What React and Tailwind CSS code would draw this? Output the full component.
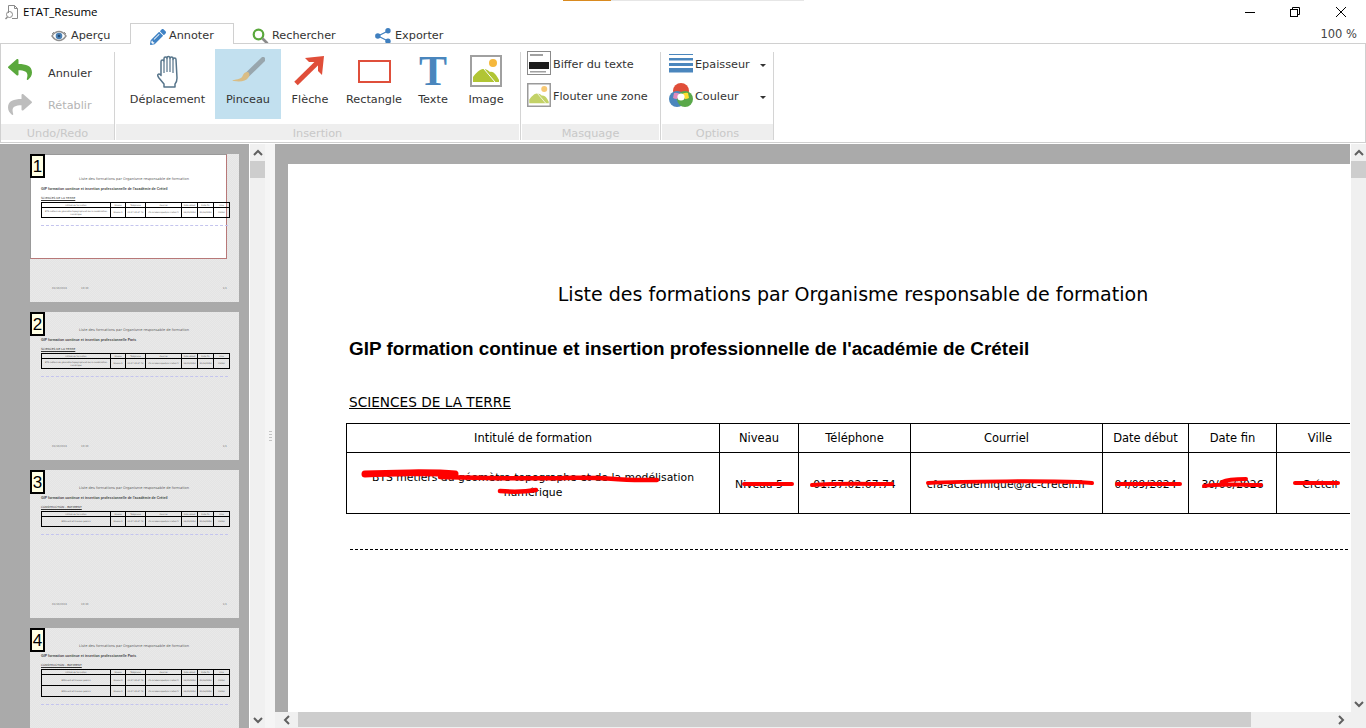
import { FaReply, FaShare, FaPencilAlt } from "react-icons/fa";

const uiFont = "font-['DejaVu_Sans',sans-serif]";

const thumbs = [
  { n: 1, heading: "GIP formation continue et insertion professionnelle de l'académie de Créteil", section: "SCIENCES DE LA TERRE", rows: 1, long: true, active: true },
  { n: 2, heading: "GIP formation continue et insertion professionnelle Paris", section: "SCIENCES DE LA TERRE", rows: 1, long: true },
  { n: 3, heading: "GIP formation continue et insertion professionnelle de l'académie de Créteil", section: "CONSTRUCTION - BATIMENT", rows: 1 },
  { n: 4, heading: "GIP formation continue et insertion professionnelle Paris", section: "CONSTRUCTION - BATIMENT", rows: 2 },
];

const TitleIcon = () => (
  <svg width="14" height="16" viewBox="0 0 14 16" fill="none" stroke="#8a8a8a" strokeWidth="1">
    <path d="M3.5 9V1.5h6l3 3v10H7" />
    <path d="M9.5 1.5v3h3" />
    <circle cx="4.5" cy="10.5" r="3" />
    <path d="M2.5 13l-2 2" strokeWidth="1.5" />
  </svg>
);

const EyeIcon = () => (
  <svg width="16" height="12" viewBox="0 0 16 12" className="shrink-0">
    <path d="M1 6c2-3 4.500-4.500 7-4.500S13 3 15 6c-2 3-4.500 4.500-7 4.500S3 9 1 6z" fill="#fff" stroke="#8f8f8f" strokeWidth="1.400" />
    <circle cx="8" cy="6" r="3.300" fill="#4a80b5" />
    <circle cx="8" cy="6" r="1.300" fill="#24486e" />
    <path d="M1 4L3 2M15 4l-2-2" stroke="#8f8f8f" />
  </svg>
);

const SearchIcon = () => (
  <svg width="17" height="17" viewBox="0 0 17 17" fill="none" className="shrink-0">
    <circle cx="6.500" cy="6.500" r="4.800" stroke="#5aa83c" strokeWidth="2.200" />
    <path d="M10.500 10.500l5 5" stroke="#8a8a8a" strokeWidth="2.600" />
  </svg>
);

const ShareIcon = () => (
  <svg width="16" height="16" viewBox="0 0 16 16" className="shrink-0">
    <path d="M13 3L3 8l10 5" fill="none" stroke="#3f7fbf" strokeWidth="1.200" />
    <circle cx="13" cy="2.800" r="2.700" fill="#3f7fbf" />
    <circle cx="2.800" cy="8" r="2.700" fill="#3f7fbf" />
    <circle cx="13" cy="13.200" r="2.700" fill="#3f7fbf" />
  </svg>
);

const HandIcon = () => (
  <svg width="24" height="33" viewBox="0 0 24 33" fill="none" stroke="#56748a" strokeWidth="1.500" strokeLinejoin="round">
    <path d="M5 19V6.500a1.500 1.500 0 0 1 3 0V3.500a1.500 1.500 0 0 1 3 0v-.5a1.500 1.500 0 0 1 3 0v.5a1.500 1.500 0 0 1 3 0v1a1.500 1.500 0 0 1 3 0L21 23c0 3-1 5-2 6v3H8v-3l-5-6c-1.500-2-1.500-3-1-3.500 1-1 2.500 0 3 1z" />
    <path d="M8 7v11M11 3.500V17M14 3.500V17M17 4.500V18" strokeWidth="1.200" />
  </svg>
);

const BrushIcon = () => (
  <svg width="34" height="28" viewBox="0 0 34 28">
    <path d="M32 2.500L17 17" stroke="#98a6ad" strokeWidth="5" strokeLinecap="round" />
    <path d="M17 15c-3 0-4 1-5 3-1 3-3 4-9 5-2 .5-2 1 0 1 7 1 12 0 14-3 1-1 2-3 1-5z" fill="#d9bd85" />
  </svg>
);

const ArrowIcon = () => (
  <svg width="32" height="30" viewBox="0 0 32 30">
    <path d="M2 27.500L26 4" stroke="#e04e39" strokeWidth="5" />
    <path d="M11 2l19-2-2 19-4-4V6H15z" fill="#e04e39" />
  </svg>
);

const ImageIcon = ({ size = 32, faded = false }) => (
  <svg width={size} height={size} viewBox="0 0 32 32">
    <rect x="1" y="1" width="30" height="30" fill="#fff" stroke={faded ? "#9a9a9a" : "#a0a0a0"} strokeWidth="2" />
    <circle cx="23" cy="8" r="4" fill={faded ? "#f7c873" : "#f5b83d"} />
    <path d="M3 27v-5c3-4 7-8 10-8 3 0 5 1 7 3 3-1 6 2 9 8v2z" fill={faded ? "#c3d267" : "#b1c534"} />
    <path d="M14 14l11 13" stroke="#fff" strokeWidth="1" />
  </svg>
);

const RedactIcon = () => (
  <svg width="24" height="24" viewBox="0 0 24 24">
    <rect x=".5" y=".5" width="23" height="23" fill="#fff" stroke="#8a8a8a" />
    <rect x="3" y="3" width="13" height="2" fill="#a0a0a0" />
    <rect x="2" y="11" width="20" height="7" fill="#1c1c1c" />
    <rect x="3" y="20" width="16" height="1.500" fill="#a0a0a0" />
  </svg>
);

const WidthIcon = () => (
  <svg width="24" height="19" viewBox="0 0 24 19" fill="#4a86bd">
    <rect width="24" height="1" />
    <rect y="4" width="24" height="2.500" />
    <rect y="9" width="24" height="3" />
    <rect y="14" width="24" height="4.500" />
  </svg>
);

const ColorIcon = () => (
  <svg width="24" height="24" viewBox="0 0 24 24">
    <circle cx="12" cy="8" r="8" fill="#e04e39" />
    <circle cx="8" cy="16" r="8" fill="#4a86bd" />
    <circle cx="16" cy="16" r="8" fill="#5aa84a" />
    <path d="M5 10a8 8 0 0 1 7 2 8 8 0 0 0-4 4 8 8 0 0 1-4-1z" fill="#e08bbd" />
    <path d="M19 10a8 8 0 0 0-7 2 8 8 0 0 1 4 4 8 8 0 0 0 4-1z" fill="#ffe033" />
    <circle cx="12" cy="14" r="3.600" fill="#fff" />
  </svg>
);

const Chevron = ({ dir }) => {
  const paths = {
    up: "M1 6l4-4 4 4",
    down: "M1 2l4 4 4-4",
    left: "M6 1L2 5l4 4",
    right: "M2 1l4 4-4 4",
  };
  return (
    <svg width="10" height="10" viewBox="0 0 10 10" fill="none" stroke="#606060" strokeWidth="2">
      <path d={paths[dir]} transform={dir === "up" || dir === "down" ? "translate(0 1)" : "translate(1 0)"} />
    </svg>
  );
};

const TitleBar = () => (
  <div className="relative flex h-[23px] items-center">
    <div className="absolute left-[563px] top-0 h-px w-[241px] bg-[#e6e6e6]">
      <div className="h-px w-[48px] bg-[#d98a1f]" />
    </div>
    <div className="ml-[5px] flex w-[18px] items-center pt-px"><TitleIcon /></div>
    <span className="font-['Open_Sans',sans-serif] text-[11.500px] text-black">ETAT_Resume</span>
    <div className="ml-auto flex items-center">
      <svg width="10" height="10" viewBox="0 0 10 10" className="mr-[35px]"><path d="M0 5.500h10" stroke="#000" /></svg>
      <svg width="10" height="10" viewBox="0 0 10 10" fill="none" stroke="#000" className="mr-[36px]">
        <rect x=".5" y="2.500" width="7" height="7" />
        <path d="M2.500 2.500v-2h7v7h-2" />
      </svg>
      <svg width="10" height="10" viewBox="0 0 10 10" fill="none" stroke="#000" className="mr-[20px]"><path d="M0 0l10 10M10 0L0 10" /></svg>
    </div>
  </div>
);

const Tab = ({ icon, label, active, className }) => (
  <div
    className={`flex items-center ${className} ${
      active ? "relative z-10 -mb-px h-[21px] border border-b-0 border-[#d0d0d0] bg-white pt-[5px]" : "h-[20px] pt-[6px]"
    }`}
  >
    {icon}
    <span>{label}</span>
  </div>
);

const TabRow = () => (
  <div className="flex h-[20px] items-end text-[11.250px] text-[#333]">
    <Tab icon={<EyeIcon />} label="Aperçu" className="ml-[51px] w-[79px] gap-[4px]" />
    <Tab icon={<FaPencilAlt className="shrink-0 text-[16px] text-[#3f82c4]" />} label="Annoter" active className="w-[104px] gap-[3px] pl-[19px]" />
    <Tab icon={<SearchIcon />} label="Rechercher" className="w-[123px] gap-[3px] pl-[18px]" />
    <Tab icon={<ShareIcon />} label="Exporter" className="gap-[4px] pl-[18px]" />
    <span className="ml-auto mr-[9px] self-center pt-[4px] text-[11.500px] text-[#444]">100 %</span>
  </div>
);

const Group = ({ title, className, children }) => (
  <div className={`flex flex-col ${className}`}>
    <div className="flex h-[80px]">{children}</div>
    <div className="flex h-[16px] items-center justify-center bg-[#eeeeee] pt-[4px] text-[11.250px] text-[#c8c8c8]">{title}</div>
  </div>
);

const Separator = ({ className = "" }) => <div className={`h-[88px] w-px self-end bg-[#d4d4d4] ${className}`} />;

const BigButton = ({ icon, label, active, className }) => (
  <div className={`flex h-[70px] flex-col items-center ${active ? "bg-[#c2e0ef]" : ""} ${className}`}>
    <div className="flex h-[42px] items-center justify-center pt-[2px]">{icon}</div>
    <span className="mt-[1px]">{label}</span>
  </div>
);

const SmallRow = ({ icon, label, caret, className = "" }) => (
  <div className={`flex h-[32px] items-center ${className}`}>
    <div className="mb-[4px] flex w-[26px] items-center">{icon}</div>
    <span>{label}</span>
    {caret && <span className="ml-auto mr-[7px] h-0 w-0 border-x-[3px] border-t-[3px] border-x-transparent border-t-[#333]" />}
  </div>
);

const Ribbon = () => (
  <div className="h-[100px] border border-[#d0d0d0] bg-white text-[11.250px] text-[#333]">
    <div className="flex h-[96px] items-end">
      <Group title="Undo/Redo" className="w-[113px]">
        <div className="flex flex-col pl-[7px] pt-[14px]">
          <div className="flex h-[32px] items-center gap-[16px]">
            <FaReply className="mb-[10px] w-[24px] text-[25px] text-[#5aa83c]" />
            <span>Annuler</span>
          </div>
          <div className="flex h-[32px] items-center gap-[16px] text-[#b4b4b4]">
            <FaShare className="mb-[3px] w-[24px] text-[25px] text-[#bdbdbd]" />
            <span>Rétablir</span>
          </div>
        </div>
      </Group>
      <Separator className="mr-px" />
      <Group title="Insertion" className="w-[403px]">
        <div className="flex pl-[4px] pt-[5px]">
          <BigButton icon={<HandIcon />} label="Déplacement" className="w-[95px]" />
          <BigButton icon={<BrushIcon />} label="Pinceau" active className="w-[66px]" />
          <BigButton icon={<ArrowIcon />} label="Flèche" className="w-[58px]" />
          <BigButton icon={<div className="h-[23px] w-[33px] border-2 border-[#df4f3b]" />} label="Rectangle" className="w-[70px]" />
          <BigButton
            icon={<span className="font-['Liberation_Serif',serif] text-[42px] font-bold leading-[32px] text-[#4a86bd]">T</span>}
            label="Texte"
            className="w-[48px]"
          />
          <BigButton icon={<ImageIcon />} label="Image" className="w-[58px]" />
        </div>
      </Group>
      <Separator className="ml-px mr-px" />
      <Group title="Masquage" className="w-[137px]">
        <div className="flex flex-col pl-[5px] pt-[5px]">
          <SmallRow icon={<RedactIcon />} label="Biffer du texte" />
          <SmallRow icon={<ImageIcon size={24} faded />} label="Flouter une zone" />
        </div>
      </Group>
      <Separator className="ml-px mr-px" />
      <Group title="Options" className="w-[111px]">
        <div className="flex w-full flex-col pl-[7px] pt-[5px]">
          <SmallRow icon={<WidthIcon />} label="Epaisseur" caret />
          <SmallRow icon={<ColorIcon />} label="Couleur" caret />
        </div>
      </Group>
      <Separator />
    </div>
  </div>
);

const ThumbTable = ({ rows, long }) => (
  <table className="w-[188px] table-fixed border-collapse border border-black text-center text-[2.100px] leading-[3px] text-[#555]">
    <colgroup>
      <col className="w-[69px]" />
      <col className="w-[15px]" />
      <col className="w-[20px]" />
      <col className="w-[36px]" />
      <col className="w-[16px]" />
      <col className="w-[16px]" />
      <col className="w-[16px]" />
    </colgroup>
    <tbody>
      <tr className="h-[5px]">
        {["Intitulé de formation", "Niveau", "Téléphone", "Courriel", "Date début", "Date fin", "Ville"].map((h) => (
          <td key={h} className="border border-black p-0">{h}</td>
        ))}
      </tr>
      {Array.from({ length: rows }).map((_, i) => (
        <tr key={i} className={rows > 1 ? "h-[11px]" : "h-[10px]"}>
          <td className="border border-black p-0">
            {long ? "BTS métiers du géomètre-topographe et de la modélisation numérique" : "Bâtiment et travaux publics"}
          </td>
          <td className="border border-black p-0">Niveau 5</td>
          <td className="border border-black p-0">01.57.02.67.74</td>
          <td className="border border-black p-0">cfa-academique@ac-creteil.fr</td>
          <td className="border border-black p-0">04/09/2024</td>
          <td className="border border-black p-0">30/06/2026</td>
          <td className="border border-black p-0">Créteil</td>
        </tr>
      ))}
    </tbody>
  </table>
);

const Thumb = ({ thumb }) => (
  <div className="relative h-[148px] w-[209px] shrink-0 bg-[repeating-conic-gradient(#e4e4e4_0_25%,#e9e9e9_0_50%)] bg-[length:2px_2px]">
    {thumb.active && <div className="absolute left-0 top-0 h-[105px] w-[197px] border border-l-[#999] border-t-[#999] border-r-[#b87878] border-b-[#b87878] bg-white" />}
    <div className="absolute left-0 top-0 flex h-[24px] w-[15px] items-center justify-center border-2 border-black bg-[#ffffe4] font-['Liberation_Sans',sans-serif] text-[17px] leading-none text-black">
      {thumb.n}
    </div>
    <div className={`relative flex h-full flex-col pl-[11px] font-['DejaVu_Sans',sans-serif] ${thumb.active ? "pt-[23px]" : "pt-[16px]"}`}>
      <div className="w-[186px] text-center text-[3.550px] leading-[4px] text-[#666]">Liste des formations par Organisme responsable de formation</div>
      <div className="mt-[6px] font-['Liberation_Sans',sans-serif] text-[3.530px] font-bold leading-[5px] text-[#444]">{thumb.heading}</div>
      <div className="mt-[4px] text-[2.900px] leading-[4px] text-[#333] underline">{thumb.section}</div>
      <div className="mt-[2px]"><ThumbTable rows={thumb.rows} long={thumb.long} /></div>
      <div className="mt-[7px] w-[187px] border-t border-dashed border-[#c4c4ee]" />
      {thumb.n < 4 && (
        <div className="absolute left-[22px] top-[133px] flex w-[175px] text-[2.600px] leading-[4px] text-[#777]">
          <span className="w-[29px]">01/10/2024</span>
          <span>10:30</span>
          <span className="ml-auto">1/1</span>
        </div>
      )}
    </div>
  </div>
);

const ThumbPanel = () => (
  <div className="flex h-full w-[249px] flex-col gap-[10px] overflow-hidden bg-[#aaaaaa] pl-[30px] pt-[10px]">
    {thumbs.map((thumb) => (
      <Thumb key={thumb.n} thumb={thumb} />
    ))}
  </div>
);

const VScrollbar = () => (
  <div className="flex h-full w-[15px] shrink-0 flex-col items-center justify-between bg-[#f0f0f0]">
    <div className="flex w-full flex-col items-center">
      <div className="flex h-[17px] items-center justify-center"><Chevron dir="up" /></div>
      <div className="h-[17px] w-full bg-[#cdcdcd]" />
    </div>
    <div className="flex h-[17px] items-center justify-center"><Chevron dir="down" /></div>
  </div>
);

const RedMarks = () => (
  <svg className="pointer-events-none absolute left-0 top-0" width="1130" height="548" viewBox="288 164 1130 548" fill="none" stroke="#ff0000" strokeLinecap="round">
    <path d="M365 474c20-1 70-2 90 0" strokeWidth="7" />
    <path d="M440 477c50 1 80 2 125 1s60 3 92 2" strokeWidth="4.500" />
    <path d="M500 491c12 1 24 1 36-1" strokeWidth="4.500" />
    <path d="M744 484h48" strokeWidth="4" />
    <path d="M812 485c25-2 55-1 80-1" strokeWidth="4" />
    <path d="M928 483c40-2 120-2 150-1l14 1" strokeWidth="4" />
    <path d="M1117 484h63" strokeWidth="4" />
    <path d="M1204 486c15-3 40-1 57-1M1222 482c6-3 16-3 24-3" strokeWidth="4" />
    <path d="M1295 483h43" strokeWidth="4" />
  </svg>
);

const DocTable = () => (
  <table className="-ml-px w-[1017px] table-fixed border-collapse border border-black text-center font-['DejaVu_Sans',sans-serif] text-[11.500px] leading-[15px] text-black">
    <colgroup>
      <col className="w-[373px]" />
      <col className="w-[79px]" />
      <col className="w-[112px]" />
      <col className="w-[192px]" />
      <col className="w-[86px]" />
      <col className="w-[88px]" />
      <col className="w-[87px]" />
    </colgroup>
    <tbody>
      <tr className="h-[29px]">
        {["Intitulé de formation", "Niveau", "Téléphone", "Courriel", "Date début", "Date fin", "Ville"].map((h) => (
          <td key={h} className="border border-black p-0">{h}</td>
        ))}
      </tr>
      <tr className="h-[61px] text-[10.800px]">
        <td className="border border-black px-[10px] pb-0 pt-[3px]">BTS métiers du géomètre-topographe et de la modélisation numérique</td>
        <td className="border border-black p-0 pt-[3px]">Niveau 5</td>
        <td className="border border-black p-0 pt-[3px]">01.57.02.67.74</td>
        <td className="border border-black p-0 pt-[3px]">cfa-academique@ac-creteil.fr</td>
        <td className="border border-black p-0 pt-[3px]">04/09/2024</td>
        <td className="border border-black p-0 pt-[3px]">30/06/2026</td>
        <td className="border border-black p-0 pt-[3px]">Créteil</td>
      </tr>
    </tbody>
  </table>
);

const Viewer = () => (
  <div className="flex h-full min-w-0 flex-1 flex-col">
    <div className="flex min-h-0 flex-1">
      <div className="min-w-0 flex-1 overflow-hidden bg-[#aaaaaa] pl-[13px] pt-[20px]">
        <div className="relative h-[548px] w-[1130px] bg-white pl-[59px]">
          <h1 className="pr-[59px] pt-[118px] text-center font-['DejaVu_Sans',sans-serif] text-[19.050px] leading-[24px] text-black">
            Liste des formations par Organisme responsable de formation
          </h1>
          <h2 className="ml-[2px] mt-[31px] font-['Liberation_Sans',sans-serif] text-[18.900px] font-bold leading-[24px] text-black">
            GIP formation continue et insertion professionnelle de l'académie de Créteil
          </h2>
          <div className="ml-[2px] mt-[31px] font-['DejaVu_Sans',sans-serif] text-[13.670px] leading-[20px] text-black underline">SCIENCES DE LA TERRE</div>
          <div className="mt-[11px]"><DocTable /></div>
          <div className="ml-[3px] mt-[35px] border-t border-dashed border-black" />
          <RedMarks />
        </div>
      </div>
      <div className="w-px shrink-0 bg-white" />
      <VScrollbar />
    </div>
    <div className="flex h-[16px] shrink-0 items-center bg-[#f0f0f0]">
      <div className="flex w-[23px] justify-center"><Chevron dir="left" /></div>
      <div className="h-[15px] w-[953px] self-start bg-[#cdcdcd]" />
      <div className="ml-auto mr-[20px] flex"><Chevron dir="right" /></div>
    </div>
  </div>
);

const App = () => {
  return (
    <div className={`flex h-[728px] w-[1366px] flex-col overflow-hidden bg-white ${uiFont}`}>
      <TitleBar />
      <TabRow />
      <Ribbon />
      <div className="mt-px flex min-h-0 flex-1">
        <ThumbPanel />
        <div className="w-px shrink-0 bg-white" />
        <VScrollbar />
        <div className="flex h-full w-[10px] shrink-0 flex-col items-center justify-center gap-[2px] bg-[#f5f5f5]">
          <div className="h-px w-[3px] bg-[#c4c4c4]" />
          <div className="h-px w-[3px] bg-[#c4c4c4]" />
          <div className="h-px w-[3px] bg-[#c4c4c4]" />
          <div className="h-px w-[3px] bg-[#c4c4c4]" />
        </div>
        <Viewer />
      </div>
    </div>
  );
};

export default App;
